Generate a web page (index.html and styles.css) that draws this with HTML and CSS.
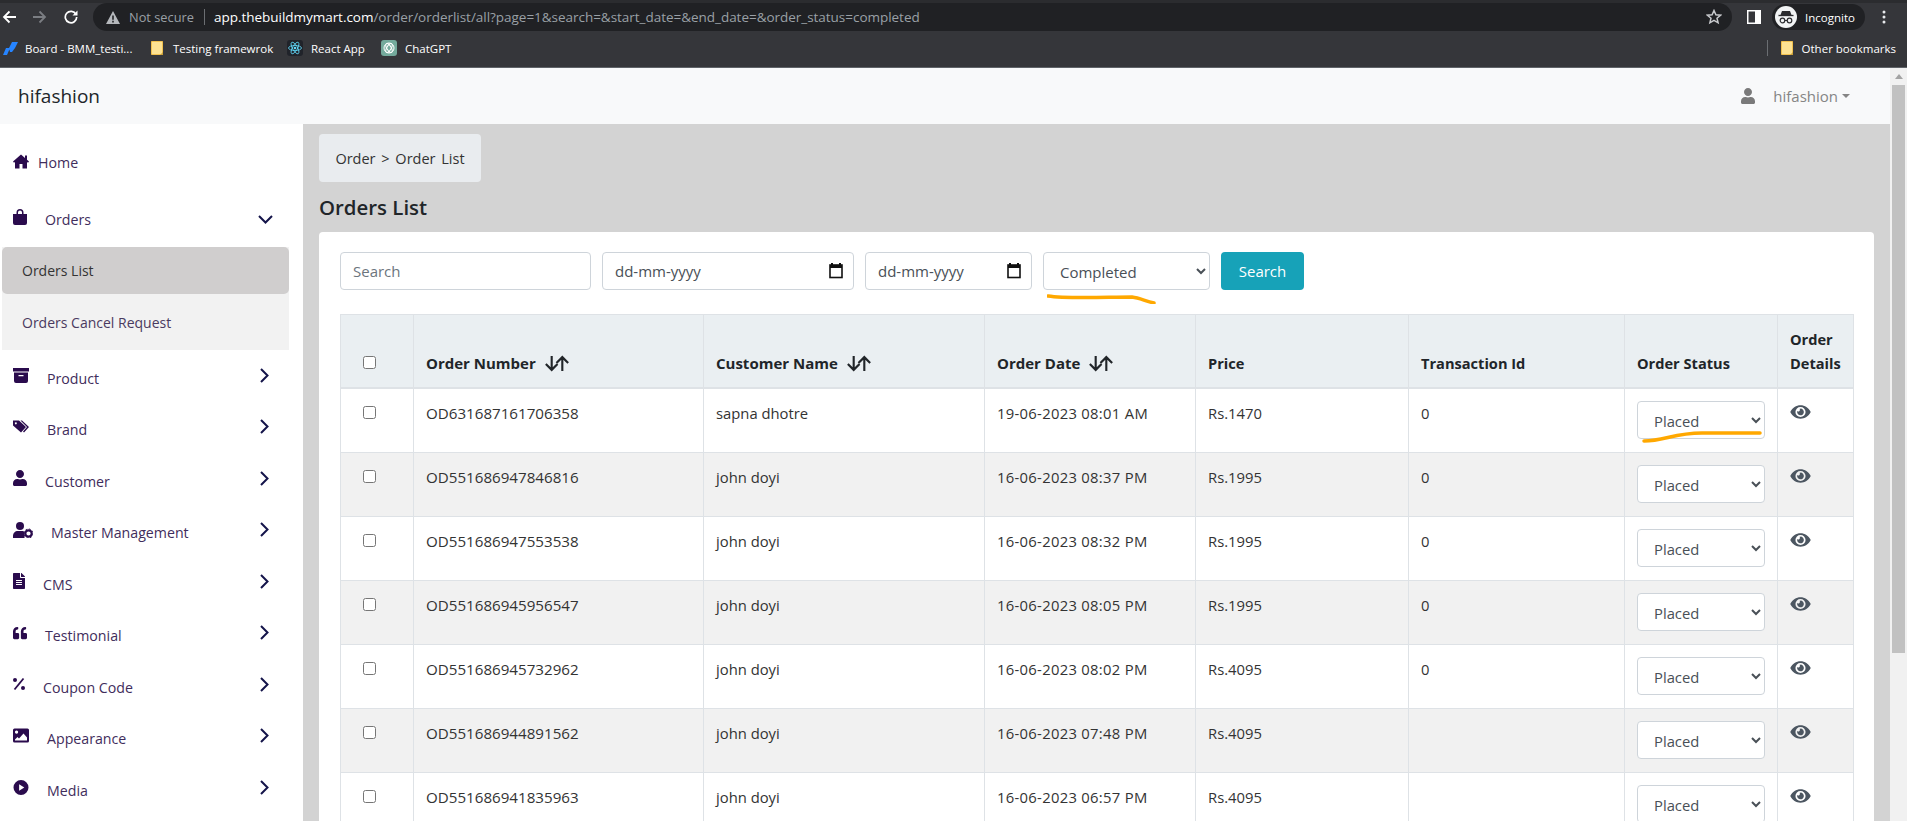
FILE: index.html
```html
<!DOCTYPE html>
<html lang="en">
<head>
<meta charset="utf-8">
<title>Orders List</title>
<link rel="stylesheet" href="styles.css">
</head>
<body>
<svg class="defs" width="0" height="0" aria-hidden="true">
  <symbol id="i-chev-r" viewBox="0 0 9 15"><path d="M1 1l6.500 6.500L1 14" fill="none" stroke="currentColor" stroke-width="2"/></symbol>
  <symbol id="i-eye" viewBox="0 0 576 512"><path d="M572.52 241.4C518.29 135.59 410.93 64 288 64S57.68 135.64 3.48 241.41a32.35 32.35 0 0 0 0 29.19C57.71 376.41 165.07 448 288 448s230.32-71.64 284.52-177.41a32.35 32.35 0 0 0 0-29.19zM288 400a144 144 0 1 1 144-144 143.93 143.93 0 0 1-144 144zm0-240a95.31 95.31 0 0 0-25.31 3.79 47.85 47.85 0 0 1-66.9 66.9A95.78 95.78 0 1 0 288 160z" fill="currentColor"/></symbol>
  <symbol id="i-sort" viewBox="0 0 24 16"><path d="M7 1v13M1.500 8.500L7 14l5.500-5.500M17 15V2M11.500 7.500L17 2l5.500 5.500" fill="none" stroke="currentColor" stroke-width="2"/></symbol>
  <symbol id="i-cal" viewBox="0 0 14 16"><path d="M3 0v2M11 0v2" stroke="#111" stroke-width="2"/><rect x="1" y="2" width="12" height="12.500" fill="none" stroke="#111" stroke-width="1.600"/><rect x="1" y="2" width="12" height="3" fill="#111"/></symbol>
  <symbol id="i-user" viewBox="0 0 448 512"><path d="M224 256c70.7 0 128-57.3 128-128S294.7 0 224 0 96 57.3 96 128s57.3 128 128 128zm89.6 32h-16.700c-22.200 10.200-46.900 16-72.900 16s-50.600-5.800-72.900-16h-16.700C60.200 288 0 348.200 0 422.400V464c0 26.500 21.500 48 48 48h352c26.500 0 48-21.500 48-48v-41.600c0-74.200-60.200-134.400-134.400-134.400z" fill="currentColor"/></symbol>
  <symbol id="i-folder" viewBox="0 0 12 14"><path d="M.5.500h11v13H.5z" fill="#fde293" stroke="#f2c14e"/><path d="M9 14l3-3v3z" fill="#c9a13a"/></symbol>
</svg>

<header class="chrome">
  <div class="toolbar">
    <svg class="nav-ic" viewBox="0 0 14 14"><path d="M14 7H2M7.500 1.500L2 7l5.500 5.500" fill="none" stroke="#fff" stroke-width="1.800"/></svg>
    <svg class="nav-ic dim" viewBox="0 0 14 14"><path d="M0 7h12M6.500 1.500L12 7l-5.500 5.500" fill="none" stroke="#7b7e83" stroke-width="1.800"/></svg>
    <svg class="nav-ic" viewBox="0 0 14 14"><path d="M12 4.300A5.700 5.700 0 1 0 12.700 7" fill="none" stroke="#fff" stroke-width="1.700"/><path d="M13.500 .5v5h-5z" fill="#fff"/></svg>
    <div class="omnibox">
      <svg class="warn" viewBox="0 0 14 13"><path fill-rule="evenodd" d="M7 0l7 13H0zM6.200 4.500v4.300h1.600V4.500zM6.200 9.800v1.600h1.600V9.800z" fill="#b5b8bc"/></svg>
      <span class="not-secure">Not secure</span>
      <span class="omni-sep"></span>
      <span class="url"><b>app.thebuildmymart.com</b>/order/orderlist/all?page=1&amp;search=&amp;start_date=&amp;end_date=&amp;order_status=completed</span>
      <svg class="star" viewBox="0 0 16 16"><path d="M8 1.500l1.900 4.300 4.600.4-3.500 3 1.100 4.600L8 11.400l-4.100 2.400L5 9.200l-3.500-3 4.600-.4z" fill="none" stroke="#c8cacd" stroke-width="1.500"/></svg>
    </div>
    <svg class="panel" viewBox="0 0 14 14"><rect width="14" height="14" fill="#fff"/><rect x="1.500" y="1.500" width="6.500" height="11" fill="#35363a"/></svg>
    <div class="incog">
      <span class="incog-ic"><svg viewBox="0 0 22 22"><path d="M7 5h8l1.500 4h-11z" fill="#2b2c2f"/><path d="M3.500 9.500h15" stroke="#2b2c2f" stroke-width="1.300"/><circle cx="7.500" cy="14.500" r="2.300" fill="none" stroke="#2b2c2f" stroke-width="1.200"/><circle cx="14.500" cy="14.500" r="2.300" fill="none" stroke="#2b2c2f" stroke-width="1.200"/><path d="M9.800 14.500h2.400" stroke="#2b2c2f"/></svg></span>
      <span class="incog-txt">Incognito</span>
    </div>
    <svg class="dots" viewBox="0 0 4 14"><circle cx="2" cy="2" r="1.500" fill="#e8eaed"/><circle cx="2" cy="7" r="1.500" fill="#e8eaed"/><circle cx="2" cy="12" r="1.500" fill="#e8eaed"/></svg>
  </div>
  <div class="bookmarks">
    <svg class="bm-ic first" viewBox="0 0 15 13"><path d="M0 13l3-7h4l-3 7zM6 6l3-6h6l-3 6-3 4H7z" fill="#2684ff"/></svg>
    <span class="bm-txt w-board">Board - BMM_testi...</span>
    <svg class="bm-folder" viewBox="0 0 12 14"><use href="#i-folder"/></svg>
    <span class="bm-txt w-test">Testing framewrok</span>
    <span class="bm-box react"><svg viewBox="0 0 16 16"><g fill="none" stroke="#61dafb" stroke-width=".8"><ellipse cx="8" cy="8" rx="6.500" ry="2.500"/><ellipse cx="8" cy="8" rx="6.500" ry="2.500" transform="rotate(60 8 8)"/><ellipse cx="8" cy="8" rx="6.500" ry="2.500" transform="rotate(120 8 8)"/></g><circle cx="8" cy="8" r="1.300" fill="#61dafb"/></svg></span>
    <span class="bm-txt w-react">React App</span>
    <span class="bm-box gpt"><svg viewBox="0 0 16 16"><g fill="none" stroke="#fff" stroke-width="1"><circle cx="8" cy="8" r="5"/><ellipse cx="8" cy="8" rx="5" ry="2.200" transform="rotate(60 8 8)"/><ellipse cx="8" cy="8" rx="5" ry="2.200" transform="rotate(120 8 8)"/></g></svg></span>
    <span class="bm-txt">ChatGPT</span>
    <span class="bm-sep"></span>
    <svg class="bm-folder other" viewBox="0 0 12 14"><use href="#i-folder"/></svg>
    <span class="bm-txt">Other bookmarks</span>
  </div>
</header>

<div class="page">
  <div class="site">
    <nav class="topnav">
      <span class="brand">hifashion</span>
      <span class="account">
        <svg class="acc-ic"><use href="#i-user"/></svg>
        <span class="acc-name">hifashion</span>
        <span class="caret"></span>
      </span>
    </nav>
    <div class="body-row">
      <aside class="sidebar">
        <ul class="menu">
          <li class="item home">
            <svg class="ic w16 tight" viewBox="0 0 16 14"><path d="M8 0L0 7l1 1.200 1-.8V14h4.500V9.500h3V14H14V7.400l1 .8L16 7l-2-1.800V1h-2v2.400z"/></svg>
            <span class="label">Home</span>
          </li>
          <li class="item orders">
            <svg class="ic w14" viewBox="0 0 14 16"><path fill-rule="evenodd" d="M3.500 5V3.500a3.500 3.500 0 0 1 7 0V5H14v9a2 2 0 0 1-2 2H2a2 2 0 0 1-2-2V5zM5 5h4V3.500a2 2 0 0 0-4 0z"/></svg>
            <span class="label">Orders</span>
            <svg class="chev-d" viewBox="0 0 15 9"><path d="M1 1l6.500 6.500L14 1" fill="none" stroke="currentColor" stroke-width="2"/></svg>
          </li>
          <li class="sub">
            <a class="sub-link active">Orders List</a>
            <a class="sub-link">Orders Cancel Request</a>
          </li>
          <li class="item">
            <svg class="ic w16" viewBox="0 0 16 15"><path fill-rule="evenodd" d="M0 0h16v3.500H0zM1 4.500h14V13a2 2 0 0 1-2 2H3a2 2 0 0 1-2-2zM5.500 7v1.300h5V7z"/></svg>
            <span class="label">Product</span>
            <svg class="chev"><use href="#i-chev-r"/></svg>
          </li>
          <li class="item">
            <svg class="ic w16" viewBox="0 0 16 12"><path fill-rule="evenodd" d="M0 0h6l7 6.500L8 12 0 5zM2.800 1.800a1 1 0 1 0 .1 0z"/><path d="M9 0l7 6.500-5 5.500-1-1 4-4.500L7.500 0z"/></svg>
            <span class="label">Brand</span>
            <svg class="chev"><use href="#i-chev-r"/></svg>
          </li>
          <li class="item">
            <svg class="ic w14"><use href="#i-user"/></svg>
            <span class="label">Customer</span>
            <svg class="chev"><use href="#i-chev-r"/></svg>
          </li>
          <li class="item">
            <svg class="ic w20" viewBox="0 0 20 16"><circle cx="7" cy="4" r="4"/><path d="M0 16v-2c0-3 2-5 5-5h4c1 0 2 .3 2.500.7V16z"/><circle cx="15.500" cy="11.500" r="3.200" fill="none" stroke="currentColor" stroke-width="2.200"/><circle cx="15.500" cy="11.500" r="4.500" fill="none" stroke="currentColor" stroke-width="1" stroke-dasharray="1.800 1.700"/></svg>
            <span class="label">Master Management</span>
            <svg class="chev"><use href="#i-chev-r"/></svg>
          </li>
          <li class="item">
            <svg class="ic w12" viewBox="0 0 384 512"><path d="M224 136V0H24C10.700 0 0 10.700 0 24v464c0 13.300 10.700 24 24 24h336c13.300 0 24-10.700 24-24V160H248c-13.200 0-24-10.800-24-24zm64 236c0 6.600-5.400 12-12 12H108c-6.600 0-12-5.400-12-12v-8c0-6.600 5.400-12 12-12h168c6.600 0 12 5.400 12 12v8zm0-64c0 6.600-5.400 12-12 12H108c-6.600 0-12-5.400-12-12v-8c0-6.600 5.400-12 12-12h168c6.600 0 12 5.400 12 12v8zm0-72v8c0 6.600-5.400 12-12 12H108c-6.600 0-12-5.400-12-12v-8c0-6.600 5.400-12 12-12h168c6.600 0 12 5.400 12 12zm96-114.100v6.100H256V0h6.100c6.400 0 12.500 2.500 17 7l97.900 98c4.500 4.500 7 10.600 7 16.900z"/></svg>
            <span class="label">CMS</span>
            <svg class="chev"><use href="#i-chev-r"/></svg>
          </li>
          <li class="item">
            <svg class="ic w14" viewBox="0 0 512 512"><path d="M464 256h-80v-64c0-35.300 28.700-64 64-64h8c13.300 0 24-10.700 24-24V56c0-13.300-10.700-24-24-24h-8c-88.400 0-160 71.600-160 160v240c0 26.500 21.500 48 48 48h128c26.500 0 48-21.500 48-48V304c0-26.500-21.500-48-48-48zm-288 0H96v-64c0-35.300 28.700-64 64-64h8c13.300 0 24-10.700 24-24V56c0-13.300-10.700-24-24-24h-8C71.600 32 0 103.600 0 192v240c0 26.500 21.500 48 48 48h128c26.500 0 48-21.500 48-48V304c0-26.500-21.500-48-48-48z"/></svg>
            <span class="label">Testimonial</span>
            <svg class="chev"><use href="#i-chev-r"/></svg>
          </li>
          <li class="item">
            <svg class="ic w12" viewBox="0 0 12 12"><circle cx="2" cy="2" r="2"/><circle cx="10" cy="10" r="2"/><path d="M1.500 11.500L10.500.5" stroke="currentColor" stroke-width="1.800"/></svg>
            <span class="label">Coupon Code</span>
            <svg class="chev"><use href="#i-chev-r"/></svg>
          </li>
          <li class="item">
            <svg class="ic w16" viewBox="0 0 16 14"><path fill-rule="evenodd" d="M1.500 0h13A1.500 1.500 0 0 1 16 1.500v11a1.500 1.500 0 0 1-1.500 1.500h-13A1.500 1.500 0 0 1 0 12.500v-11A1.500 1.500 0 0 1 1.500 0zM3.500 2a1.600 1.600 0 1 0 .1 0zM2 12h12V9l-3.500-4L6 10 4.500 8.500 2 11z"/></svg>
            <span class="label">Appearance</span>
            <svg class="chev"><use href="#i-chev-r"/></svg>
          </li>
          <li class="item">
            <svg class="ic w16" viewBox="0 0 16 16"><path fill-rule="evenodd" d="M8 0a8 8 0 1 1 0 16A8 8 0 0 1 8 0zM6 4.500v7l5.500-3.500z"/></svg>
            <span class="label">Media</span>
            <svg class="chev"><use href="#i-chev-r"/></svg>
          </li>
        </ul>
      </aside>
      <main class="content">
        <div class="crumb">Order &gt; Order List</div>
        <h1 class="title">Orders List</h1>
        <section class="card">
          <form class="filters">
            <input class="field f-search" type="text" placeholder="Search">
            <div class="field f-date"><span>dd-mm-yyyy</span><svg class="cal"><use href="#i-cal"/></svg></div>
            <div class="field f-date2"><span>dd-mm-yyyy</span><svg class="cal"><use href="#i-cal"/></svg></div>
            <select class="field f-status"><option>Completed</option></select>
            <button class="btn" type="button">Search</button>
            <svg class="scribble s1" viewBox="0 0 110 10"><path d="M1 2C20 5 60 3 85 3c8 1 13 4 22 6" fill="none" stroke="#ffa800" stroke-width="3.500" stroke-linecap="round"/></svg>
          </form>
          <table class="orders-table">
            <colgroup>
              <col class="c1"><col class="c2"><col class="c3"><col class="c4"><col class="c5"><col class="c6"><col class="c7"><col class="c8">
            </colgroup>
            <thead>
              <tr>
                <th class="chk"><input type="checkbox"></th>
                <th>Order Number <svg class="sort"><use href="#i-sort"/></svg></th>
                <th>Customer Name <svg class="sort"><use href="#i-sort"/></svg></th>
                <th>Order Date <svg class="sort"><use href="#i-sort"/></svg></th>
                <th>Price</th>
                <th>Transaction Id</th>
                <th>Order Status</th>
                <th>Order Details</th>
              </tr>
            </thead>
            <tbody>
              <tr>
                <td class="chk"><input type="checkbox"></td><td>OD631687161706358</td><td>sapna dhotre</td><td>19-06-2023 08:01 AM</td><td>Rs.1470</td><td>0</td>
                <td class="status"><select class="field row-select"><option>Placed</option></select><svg class="scribble s2" viewBox="0 0 120 12"><path d="M2 10c20 0 30-8 58-8h58" fill="none" stroke="#ffa800" stroke-width="3.500" stroke-linecap="round"/></svg></td>
                <td><svg class="eye"><use href="#i-eye"/></svg></td>
              </tr>
              <tr>
                <td class="chk"><input type="checkbox"></td><td>OD551686947846816</td><td>john doyi</td><td>16-06-2023 08:37 PM</td><td>Rs.1995</td><td>0</td>
                <td><select class="field row-select"><option>Placed</option></select></td>
                <td><svg class="eye"><use href="#i-eye"/></svg></td>
              </tr>
              <tr>
                <td class="chk"><input type="checkbox"></td><td>OD551686947553538</td><td>john doyi</td><td>16-06-2023 08:32 PM</td><td>Rs.1995</td><td>0</td>
                <td><select class="field row-select"><option>Placed</option></select></td>
                <td><svg class="eye"><use href="#i-eye"/></svg></td>
              </tr>
              <tr>
                <td class="chk"><input type="checkbox"></td><td>OD551686945956547</td><td>john doyi</td><td>16-06-2023 08:05 PM</td><td>Rs.1995</td><td>0</td>
                <td><select class="field row-select"><option>Placed</option></select></td>
                <td><svg class="eye"><use href="#i-eye"/></svg></td>
              </tr>
              <tr>
                <td class="chk"><input type="checkbox"></td><td>OD551686945732962</td><td>john doyi</td><td>16-06-2023 08:02 PM</td><td>Rs.4095</td><td>0</td>
                <td><select class="field row-select"><option>Placed</option></select></td>
                <td><svg class="eye"><use href="#i-eye"/></svg></td>
              </tr>
              <tr>
                <td class="chk"><input type="checkbox"></td><td>OD551686944891562</td><td>john doyi</td><td>16-06-2023 07:48 PM</td><td>Rs.4095</td><td></td>
                <td><select class="field row-select"><option>Placed</option></select></td>
                <td><svg class="eye"><use href="#i-eye"/></svg></td>
              </tr>
              <tr>
                <td class="chk"><input type="checkbox"></td><td>OD551686941835963</td><td>john doyi</td><td>16-06-2023 06:57 PM</td><td>Rs.4095</td><td></td>
                <td><select class="field row-select"><option>Placed</option></select></td>
                <td><svg class="eye"><use href="#i-eye"/></svg></td>
              </tr>
            </tbody>
          </table>
        </section>
      </main>
    </div>
  </div>
  <div class="scrollbar">
    <span class="sb-up"></span>
    <span class="sb-thumb"></span>
  </div>
</div>
</body>
</html>
```

FILE: styles.css
```css
* { box-sizing: border-box; }
html, body { margin: 0; height: 821px; overflow: hidden; }
body { font-family: "Open Sans", "Noto Sans", sans-serif; font-size: 15px; color: #212529; background: #fff; }
.defs { position: absolute; }

/* browser chrome */
.chrome { height: 68px; background: #35363a; border-top: 3px solid #2b2c2f; border-bottom: 1px solid #5f6368; color: #e8eaed; }
.toolbar { height: 28px; display: flex; align-items: center; padding-left: 2px; }
.nav-ic { width: 14px; height: 14px; margin-right: 17px; flex: none; }
.omnibox { width: 1639px; flex: none; margin-left: -2px; height: 28px; border-radius: 14px; background: #202124; display: flex; align-items: center; padding-left: 13px; font-size: 13px; }
.warn { width: 14px; height: 13px; }
.not-secure { color: #9aa0a6; margin-left: 9px; width: 68px; white-space: nowrap; font-size: 12.800px; }
.omni-sep { width: 1px; height: 16px; background: #6b6e72; margin: 0 9px 0 7px; }
.url { color: #9aa0a6; white-space: nowrap; font-size: 13.500px; letter-spacing: -.03px; }
.url b { color: #fff; font-weight: 400; }
.star { width: 16px; height: 16px; margin-left: auto; margin-right: 10px; }
.panel { width: 14px; height: 14px; margin-left: 15px; flex: none; }
.incog { width: 93px; height: 26px; border-radius: 13px; background: #202124; margin-left: 11px; display: flex; align-items: center; padding-left: 3px; flex: none; }
.incog-ic { width: 22px; height: 22px; border-radius: 50%; background: #f1f3f4; display: flex; }
.incog-txt { font-size: 11.500px; color: #fff; margin-left: 8px; }
.dots { width: 4px; height: 14px; margin-left: 17px; flex: none; }
.bookmarks { height: 36px; display: flex; align-items: center; padding: 0 0 2px 3px; font-size: 11.500px; color: #fff; }
.bm-ic.first { width: 15px; height: 13px; margin-right: 7px; }
.bm-txt { white-space: nowrap; }
.w-board { width: 126px; }
.w-test { width: 114px; }
.w-react { width: 70px; }
.bm-folder { width: 12px; height: 14px; margin-right: 10px; flex: none; }
.bm-box { width: 16px; height: 16px; margin-right: 8px; border-radius: 3px; display: flex; flex: none; }
.bm-box.react { background: #20232a; }
.bm-box.gpt { background: #74aa9c; }
.bm-sep { width: 1px; height: 16px; background: #6b6e72; margin-left: auto; margin-right: 13px; }
.bm-folder.other { margin-right: 9px; }
.bm-sep ~ .bm-txt { margin-right: 11px; }

/* page frame */
.page { display: flex; height: 753px; overflow: hidden; }
.site { width: 1890px; flex: none; }
.scrollbar { width: 17px; flex: none; background: #f1f1f1; padding-top: 6px; display: flex; flex-direction: column; align-items: center; }
.sb-up { width: 0; height: 0; border: 4px solid transparent; border-top: 0; border-bottom: 5px solid #a3a3a3; }
.sb-thumb { width: 13px; height: 568px; margin-top: 6px; background: #c1c1c1; }

/* navbar */
.topnav { height: 56px; background: #f8f9fa; display: flex; align-items: center; justify-content: space-between; padding: 0 40px 0 18px; }
.brand { font-size: 19px; color: #212529; }
.account { display: flex; align-items: center; color: #858585; }
.acc-ic { width: 16px; height: 16px; color: #7a7a7a; margin-right: 17px; }
.acc-name { font-size: 15px; }
.caret { width: 0; height: 0; border: 4px solid transparent; border-bottom: 0; border-top: 4px solid #858585; margin-left: 4px; }

.body-row { display: flex; height: 697px; }

/* sidebar */
.sidebar { width: 303px; flex: none; background: #fff; padding-top: 13px; }
.menu { list-style: none; margin: 0; padding: 0; }
.item { height: 51.500px; display: flex; align-items: center; padding: 0 34px 0 13px; color: #3f2d5c; font-size: 14.200px; }
.ic { flex: none; fill: #2a0b4d; color: #2a0b4d; margin: 0 18px 6px 0; }
.ic.tight { margin-right: 9px; margin-bottom: 2px; }
.w12 { width: 12px; height: 16px; }
.w14 { width: 14px; height: 16px; }
.w16 { width: 16px; height: 15px; }
.w20 { width: 20px; height: 16px; }
.chev { width: 9px; height: 15px; margin: 0 0 6px auto; color: #14144a; flex: none; }
.chev-d { width: 15px; height: 9px; margin-left: auto; margin-right: -4px; color: #14144a; flex: none; }
.orders { margin-top: 5.500px; }
.sub { margin: 1.500px 0 2.250px 2px; width: 287px; background: #f2f2f2; }
.sub-link { display: flex; align-items: center; height: 56px; padding-left: 20px; color: #4a3a60; font-size: 14px; }
.sub-link.active { height: 47px; background: #d0cece; border-radius: 5px; color: #333; }

/* content */
.content { flex: 1; background: #d3d3d3; padding: 10px 16px 0; min-width: 0; }
.crumb { width: 162px; height: 48px; background: #e9ecef; border-radius: 4px; display: flex; align-items: center; justify-content: center; font-size: 14.500px; word-spacing: 2px; color: #333; }
.title { font-size: 20.400px; font-weight: 600; margin: 11px 0 0; height: 39px; line-height: 29px; color: #212529; }
.card { width: 1555px; height: 700px; background: #fff; border-radius: 4px; padding: 20px 21px 0; }

.filters { position: relative; display: flex; gap: 11px; height: 38px; margin-bottom: 24px; }
.field { height: 38px; border: 1px solid #ced4da; border-radius: 4px; background: #fff; font: inherit; color: #495057; padding: 0 12px; }
input.field::placeholder { color: #6c757d; opacity: 1; }
.f-search { width: 251px; }
.f-date, .f-date2 { display: flex; align-items: center; justify-content: space-between; padding-right: 10px; }
.f-date { width: 252px; }
.f-date2 { width: 167px; }
.f-status { width: 167px; padding-top: 2px; }
.cal { width: 14px; height: 16px; }
.btn { width: 83px; height: 38px; border: 0; border-radius: 4px; background: #17a2b8; color: #fff; font: inherit; padding: 0; }
.scribble { position: absolute; pointer-events: none; }
.s1 { left: 707px; top: 42px; width: 110px; height: 10px; }
.s2 { left: 17px; top: 42px; width: 120px; height: 12px; }

/* table */
.orders-table { width: 1513px; border-collapse: collapse; table-layout: fixed; }
.c1 { width: 73px; } .c2 { width: 290px; } .c3 { width: 281px; } .c4 { width: 211px; }
.c5 { width: 213px; } .c6 { width: 216px; } .c7 { width: 153px; } .c8 { width: 76px; }
.orders-table th, .orders-table td { border: 1px solid #dee2e6; padding: 12px; text-align: left; line-height: 24px; }
.orders-table th { background: #eaeff2; font-weight: 700; font-size: 14.600px; vertical-align: bottom; border-bottom: 2px solid #dee2e6; color: #212529; }
.orders-table th:nth-child(-n+4) { font-size: 15px; }
.orders-table td { vertical-align: top; height: 64px; font-size: 14.800px; color: #333; }
.orders-table td:nth-child(2) { font-size: 15.150px; }
.orders-table td:nth-child(4) { font-size: 14.800px; letter-spacing: .3px; }
.orders-table tbody tr:nth-child(even) td { background: #f1f1f1; }
.orders-table input[type=checkbox] { width: 13px; height: 13px; margin: 0; display: block; }
.orders-table th.chk input { margin: 0 0 6px 10px; }
.orders-table td.chk input { margin: 5px 0 0 10px; }
.status { position: relative; }
.row-select { display: block; width: 128px; padding-top: 2px; font-size: 14.800px; }
.sort { width: 26px; height: 17px; margin-left: 4px; vertical-align: -3px; color: #212529; }
.eye { display: block; width: 21px; height: 18px; color: #4c5661; margin-top: 2px; }
```
